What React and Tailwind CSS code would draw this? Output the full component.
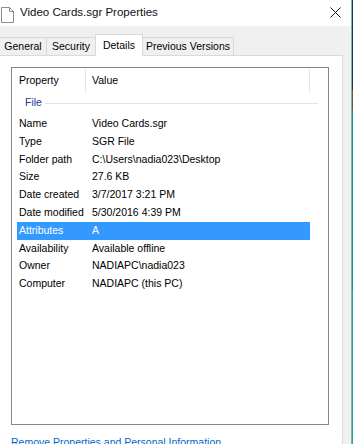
import React from "react";

const rows = [
  ["Name", "Video Cards.sgr"],
  ["Type", "SGR File"],
  ["Folder path", "C:\\Users\\nadia023\\Desktop"],
  ["Size", "27.6 KB"],
  ["Date created", "3/7/2017 3:21 PM"],
  ["Date modified", "5/30/2016 4:39 PM"],
  ["Attributes", "A"],
  ["Availability", "Available offline"],
  ["Owner", "NADIAPC\\nadia023"],
  ["Computer", "NADIAPC (this PC)"],
];

const tabs = [
  { label: "General", w: "w-[47px]", cls: "border-r" },
  { label: "Security", w: "w-[48px]", cls: "" },
  { label: "Details", w: "w-[48px]", selected: true },
  { label: "Previous Versions", w: "w-[91px]", cls: "border-r" },
];

const FileIcon = () => (
  <svg width="13" height="16" viewBox="0 0 13 16" className="shrink-0">
    <path d="M0.5 0.5 H8.5 L12.5 4.5 V15.5 H0.5 Z" fill="#fff" stroke="#8c8c8c" />
    <path d="M8.5 0.5 V4.5 H12.5" fill="none" stroke="#8c8c8c" />
  </svg>
);

const CloseIcon = () => (
  <svg width="11" height="11" viewBox="0 0 11 11">
    <path d="M0.5 0.5 L10.5 10.5 M10.5 0.5 L0.5 10.5" stroke="#111" strokeWidth="1" />
  </svg>
);

export default function App() {
  return (
    <div className="w-[353px] h-[444px] overflow-hidden flex bg-white font-['Liberation_Sans',Arial,sans-serif] text-[10.5px] text-black">
      <div className="w-[351px] flex flex-col">
        {/* title bar */}
        <div className="h-[26px] shrink-0 flex items-center bg-white">
          <div className="pl-[1px] pt-[3px]">
            <FileIcon />
          </div>
          <span className="ml-[6px] text-[11.5px] text-[#111]">Video Cards.sgr Properties</span>
          <div className="ml-auto mr-[10px] mt-[-2px]">
            <CloseIcon />
          </div>
        </div>

        <div className="flex-1 bg-[#f0f0f0] flex flex-col">
          {/* tabs */}
          <div className="h-[29px] shrink-0 flex items-end">
            {tabs.map((t) =>
              t.selected ? (
                <div
                  key={t.label}
                  className={`${t.w} h-[22px] -mb-px relative z-10 bg-white border-t border-l border-r border-[#d9d9d9] flex justify-center pt-[3px]`}
                >
                  {t.label}
                </div>
              ) : (
                <div
                  key={t.label}
                  className={`${t.w} h-[18px] border-t ${t.cls} border-[#d9d9d9] flex justify-center items-center pt-px`}
                >
                  {t.label}
                </div>
              )
            )}
          </div>

          {/* tab page */}
          <div className="flex-1 mr-[8px] bg-white border-t border-r border-[#d9d9d9] pl-[11px] pt-[11px]">
            <div className="w-[318px] h-[358px] border border-[#828790] bg-white flex flex-col">
              <div className="h-[26px] shrink-0 flex items-center">
                <div className="w-[73px] pl-[7px]">Property</div>
                <div className="w-px h-[24px] bg-[#e5e5e5]" />
                <div className="w-[223px] pl-[6px]">Value</div>
                <div className="w-px h-[24px] bg-[#e5e5e5]" />
              </div>
              <div className="h-[18px] shrink-0 mb-[3px] flex items-center pl-[13px] pr-[10px] text-[#1e3991]">
                <span>File</span>
                <div className="flex-1 h-px bg-[#dde4ea] ml-[3px]" />
              </div>
              {rows.map(([k, v]) => {
                const sel = k === "Attributes";
                return (
                  <div
                    key={k}
                    className={`h-[17.8px] shrink-0 ml-[5px] w-[293px] flex items-center ${
                      sel ? "bg-[#3399ff] text-white" : ""
                    }`}
                  >
                    <div className="w-[75px] pl-[2px] whitespace-nowrap">{k}</div>
                    <div className="whitespace-nowrap">{v}</div>
                  </div>
                );
              })}
            </div>
            <div className="mt-[10px] text-[#0066cc] leading-[14px] whitespace-nowrap">
              Remove Properties and Personal Information
            </div>
          </div>
        </div>
      </div>
      <div className="w-px bg-[#7fb3b5]" />
      <div className="w-px flex flex-col">
        <div className="h-[90px] bg-[#143a5c]" />
        <div className="h-[20px] bg-[#6b5a3c]" />
        <div className="h-[180px] bg-[#1f8c8f]" />
        <div className="flex-1 bg-[#2aa3a0]" />
      </div>
    </div>
  );
}
